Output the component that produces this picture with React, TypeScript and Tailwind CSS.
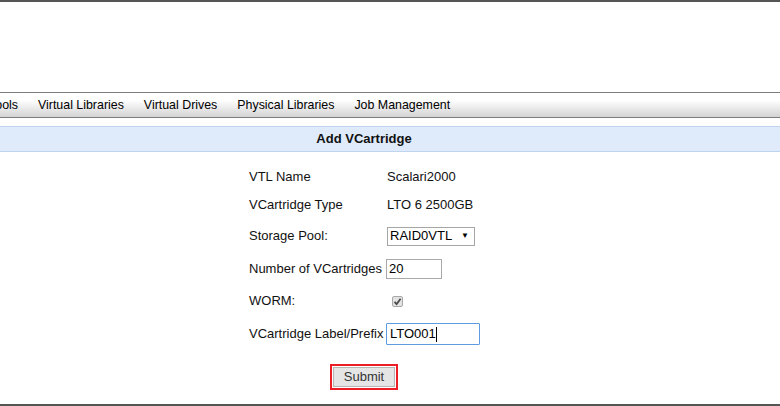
const navItems = ['Pools', 'Virtual Libraries', 'Virtual Drives', 'Physical Libraries', 'Job Management']

const Row = ({ label, h, children }: { label: string; h: string; children?: React.ReactNode }) => (
  <div className={`flex items-center ${h}`}>
    <div className="w-[138px] shrink-0">{label}</div>
    <div className="flex items-center">{children}</div>
  </div>
)

export default function App() {
  return (
    <div
      className="w-[780px] h-[406px] overflow-hidden bg-white border-t-2 border-b-2 border-[#555] flex flex-col text-[13px] text-[#111]"
      style={{ fontFamily: '"Liberation Sans", Arial, sans-serif' }}
    >
      <div className="h-[90px]" />
      <nav className="h-[26px] border-y border-[#7d7d7d] bg-gradient-to-b from-white from-30% to-[#d3d3d3] flex items-center gap-[20px] -ml-[13px] text-[12.4px] text-black">
        {navItems.map((n) => (
          <span key={n}>{n}</span>
        ))}
      </nav>
      <div className="h-[8px]" />
      <div className="h-[26px] border-y border-[#bfd5ef] bg-[#dfebfa]">
        <div className="w-[728px] h-full flex items-center justify-center font-bold">Add VCartridge</div>
      </div>
      <div className="w-[730px] flex flex-col items-center pt-[11px]">
        <div className="w-[232px] flex flex-col">
          <Row label="VTL Name" h="h-[28px]">Scalari2000</Row>
          <Row label="VCartridge Type" h="h-[28px]">LTO 6 2500GB</Row>
          <Row label="Storage Pool:" h="h-[34px]">
            <div className="w-[88px] h-[19px] border border-[#a6a6a6] flex items-center justify-between pl-[2px] pr-[5px] text-black">
              <span>RAID0VTL</span>
              <span className="text-[8px] leading-none">▼</span>
            </div>
          </Row>
          <Row label="Number of VCartridges" h="h-[32px]">
            <div className="-ml-px w-[56px] h-[20px] border border-[#a9a9a9] flex items-center pl-[2px] text-black">20</div>
          </Row>
          <Row label="WORM:" h="h-[32px]">
            <div className="ml-[5px] w-[11px] h-[11px] rounded-[2px] border border-[#a8a8a8] bg-[#e3e3e3] flex items-center justify-center">
              <svg width="9" height="9" viewBox="0 0 9 9">
                <path d="M1.5 4.8 L3.6 7 L7.6 1.8" fill="none" stroke="#4a4a4a" strokeWidth="1.8" />
              </svg>
            </div>
          </Row>
          <Row label="VCartridge Label/Prefix" h="h-[34px]">
            <div className="-ml-px w-[94px] h-[22px] border border-[#5d9ce0] rounded-[1px] flex items-center pl-[3px] text-black">
              <span>LTO001</span>
              <span className="w-px h-[15px] bg-black" />
            </div>
          </Row>
        </div>
        <div className="mt-[13px] -ml-[2px] border-2 border-[#ee1c24] p-px">
          <div className="w-[62px] h-[20px] bg-[#e5e5e5] border border-[#b5b5b5] flex items-center justify-center text-[#333]">
            Submit
          </div>
        </div>
      </div>
    </div>
  )
}
